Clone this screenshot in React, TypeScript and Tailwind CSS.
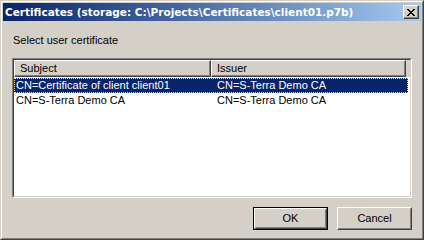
import React from 'react';

const rows = [
  { subject: 'CN=Certificate of client client01', issuer: 'CN=S-Terra Demo CA', selected: true },
  { subject: 'CN=S-Terra Demo CA', issuer: 'CN=S-Terra Demo CA', selected: false },
];

const font = { fontFamily: '"Liberation Sans", Arial, sans-serif' };
const titleFont = { fontFamily: '"DejaVu Sans", Tahoma, sans-serif' };

function Button({ label, isDefault }: { label: string; isDefault?: boolean }) {
  return (
    <div className={`w-[75px] h-[23px] ${isDefault ? 'border border-black' : ''}`}>
      <div className="h-full border border-t-white border-l-white border-r-[#404040] border-b-[#404040]">
        <div className="h-full flex items-center justify-center border border-t-[#d4d0c8] border-l-[#d4d0c8] border-r-[#808080] border-b-[#808080] text-[11px] text-black">
          {label}
        </div>
      </div>
    </div>
  );
}

export default function App() {
  return (
    <div className="w-[424px] h-[240px] bg-[#d4d0c8] select-none" style={font}>
      {/* window frame */}
      <div className="w-full h-full border border-t-[#d4d0c8] border-l-[#d4d0c8] border-r-[#404040] border-b-[#404040]">
        <div className="w-full h-full border border-t-white border-l-white border-r-[#808080] border-b-[#808080] p-px flex flex-col">
          {/* title bar */}
          <div className="h-[18px] flex items-center pl-[2px] pr-[2px] bg-gradient-to-r from-[#0a246a] to-[#a6caf0]">
            <span className="flex-1 text-white font-bold text-[10.5px] leading-none whitespace-nowrap" style={titleFont}>
              Certificates (storage: C:\Projects\Certificates\client01.p7b)
            </span>
            <div className="w-[16px] h-[14px] bg-[#d4d0c8] border border-t-white border-l-white border-r-[#404040] border-b-[#404040]">
              <div className="w-full h-full border border-t-[#d4d0c8] border-l-[#d4d0c8] border-r-[#808080] border-b-[#808080] flex items-center justify-center">
                <svg width="8" height="7" viewBox="0 0 8 7" shapeRendering="crispEdges">
                  <path d="M0 0h2v1h-2zM6 0h2v1h-2zM1 1h2v1h-2zM5 1h2v1h-2zM2 2h4v1h-4zM3 3h2v1h-2zM2 4h4v1h-4zM1 5h2v1h-2zM5 5h2v1h-2zM0 6h2v1h-2zM6 6h2v1h-2z" fill="#000" />
                </svg>
              </div>
            </div>
          </div>

          {/* body */}
          <div className="flex-1 flex flex-col px-[9px] pt-[13px] pb-[7px]">
            <div className="text-[11px] text-black leading-[13px] pl-px">Select user certificate</div>

            {/* list view */}
            <div className="mt-[11px] h-[140px] border border-t-[#808080] border-l-[#808080] border-r-white border-b-white">
              <div className="h-full border border-t-[#404040] border-l-[#404040] border-r-[#d4d0c8] border-b-[#d4d0c8] bg-white flex flex-col">
                {/* header */}
                <div className="flex h-[17px] bg-[#d4d0c8]">
                  <div className="w-[197px] border border-t-white border-l-white border-r-[#404040] border-b-[#404040]">
                    <div className="h-full border-r border-b border-[#808080] text-[11px] text-black leading-[13px] pl-[5px] pt-[1px]">
                      Subject
                    </div>
                  </div>
                  <div className="w-[195px] border border-t-white border-l-white border-r-[#404040] border-b-[#404040]">
                    <div className="h-full border-r border-b border-[#808080] text-[11px] text-black leading-[13px] pl-[5px] pt-[1px]">
                      Issuer
                    </div>
                  </div>
                  <div className="flex-1" />
                </div>
                {/* rows */}
                <div className="flex flex-col pt-px">
                  {rows.map((r) => (
                    <div
                      key={r.subject}
                      className={`flex h-[15px] text-[11px] leading-[13px] mr-[2px] ${
                        r.selected
                          ? 'bg-[#0a246a] text-white outline outline-1 outline-dotted outline-[#f5db95] -outline-offset-1'
                          : 'text-black'
                      }`}
                    >
                      <div className="w-[197px] pl-[2px] pt-[1px] whitespace-nowrap">{r.subject}</div>
                      <div className="w-[195px] pl-[6px] pt-[1px] whitespace-nowrap">{r.issuer}</div>
                    </div>
                  ))}
                </div>
              </div>
            </div>

            <div className="flex-1" />
            {/* buttons */}
            <div className="flex justify-end gap-[9px]">
              <Button label="OK" isDefault />
              <Button label="Cancel" />
            </div>
          </div>
        </div>
      </div>
    </div>
  );
}
